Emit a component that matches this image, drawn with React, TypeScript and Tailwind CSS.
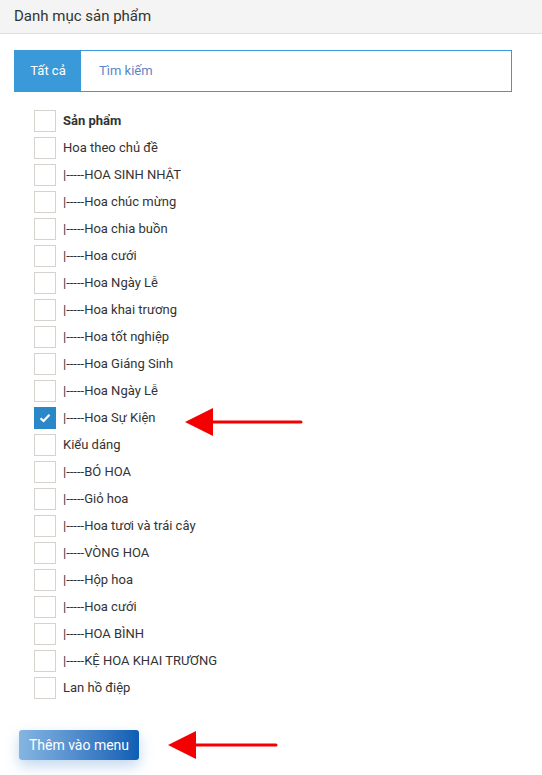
const items: { label: string; bold?: boolean; checked?: boolean }[] = [
  { label: "Sản phẩm", bold: true },
  { label: "Hoa theo chủ đề" },
  { label: "|-----HOA SINH NHẬT" },
  { label: "|-----Hoa chúc mừng" },
  { label: "|-----Hoa chia buồn" },
  { label: "|-----Hoa cưới" },
  { label: "|-----Hoa Ngày Lễ" },
  { label: "|-----Hoa khai trương" },
  { label: "|-----Hoa tốt nghiệp" },
  { label: "|-----Hoa Giáng Sinh" },
  { label: "|-----Hoa Ngày Lễ" },
  { label: "|-----Hoa Sự Kiện", checked: true },
  { label: "Kiểu dáng" },
  { label: "|-----BÓ HOA" },
  { label: "|-----Giỏ hoa" },
  { label: "|-----Hoa tươi và trái cây" },
  { label: "|-----VÒNG HOA" },
  { label: "|-----Hộp hoa" },
  { label: "|-----Hoa cưới" },
  { label: "|-----HOA BÌNH" },
  { label: "|-----KỆ HOA KHAI TRƯƠNG" },
  { label: "Lan hồ điệp" },
];

const RedArrow = ({ width }: { width: number }) => (
  <svg width={width} height="28" viewBox={`0 0 ${width} 28`}>
    <polygon points="0,14 28,0 28,28" fill="#f50000" />
    <line x1="24" y1="14" x2={width - 2} y2="14" stroke="#f50000" strokeWidth="3" strokeLinecap="round" />
  </svg>
);

export default function App() {
  return (
    <div className="w-[542px] h-[775px] bg-white overflow-hidden font-['Roboto',sans-serif] text-[#333]">
      <div className="h-[34px] bg-[#f4f4f4] border-b border-[#dedede] px-[14px] flex items-center">
        <h2 className="text-[15px] text-[#333]">Danh mục sản phẩm</h2>
      </div>

      <div className="ml-[14px] mr-[30px] mt-[16px] h-[42px] border border-[#3a9ad9] flex">
        <div className="w-[66px] bg-[#3a9ad9] text-white text-[13px] flex items-center justify-center">
          Tất cả
        </div>
        <div className="pl-[18px] text-[13px] text-[#5b86c5] flex items-center">Tìm kiếm</div>
      </div>

      <ul className="mt-[18px] pl-[34px] flex flex-col gap-[5px]">
        {items.map((it, i) => (
          <li key={i} className="flex items-center h-[22px]">
            {it.checked ? (
              <span className="w-[22px] h-[22px] bg-[#2a88c8] flex items-center justify-center">
                <svg width="12" height="10" viewBox="0 0 12 10">
                  <path d="M1.5 5.2 L4.6 8 L10.5 1.8" fill="none" stroke="white" strokeWidth="2.2" />
                </svg>
              </span>
            ) : (
              <span className="w-[22px] h-[22px] border border-[#d6d2ce] bg-white" />
            )}
            <span className={`ml-[7px] text-[13px] ${it.bold ? "font-bold" : ""}`}>
              {it.label}
            </span>
            {it.checked && (
              <span className="ml-[29px] flex relative top-[4px]">
                <RedArrow width={118} />
              </span>
            )}
          </li>
        ))}
      </ul>

      <div className="mt-[31px] pl-[19px] flex items-center">
        <button className="w-[120px] h-[30px] rounded-[3px] bg-gradient-to-r from-[#85b6e2] to-[#0b5eb4] text-white text-[14px] shadow-[0_6px_14px_rgba(80,140,210,0.35)]">
          Thêm vào menu
        </button>
        <span className="ml-[29px] flex">
          <RedArrow width={110} />
        </span>
      </div>
    </div>
  );
}
